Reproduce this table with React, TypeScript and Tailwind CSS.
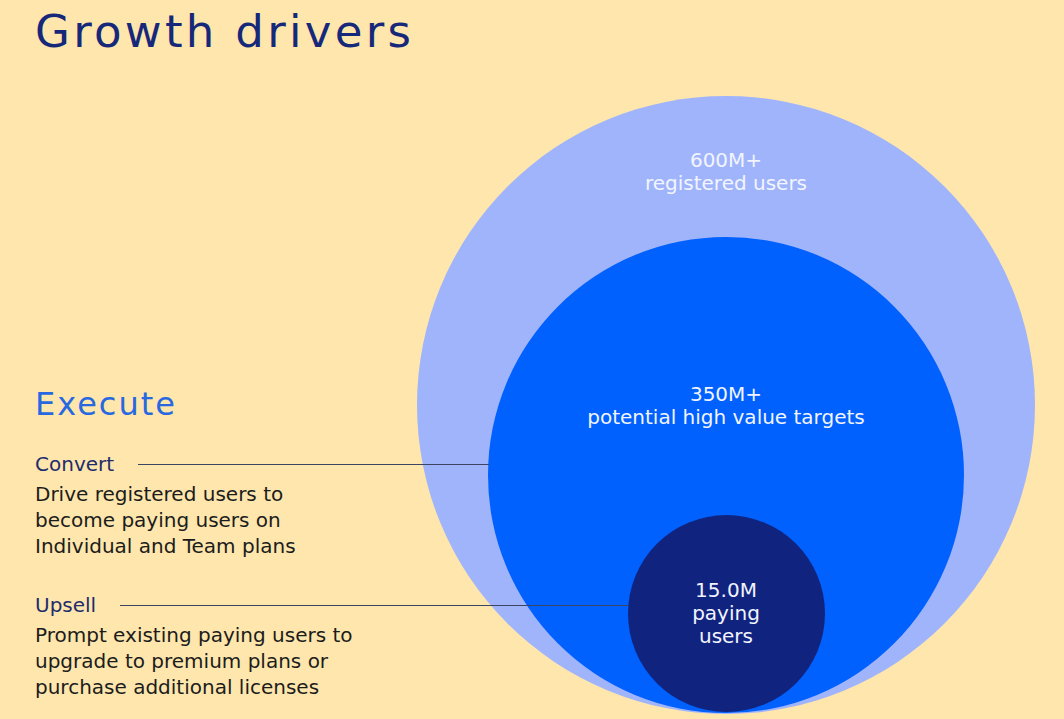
import React from 'react';

const font = "font-['DejaVu_Sans',sans-serif]";

function Lead({ label, width, lines }: { label: string; width: string; lines: string[] }) {
  return (
    <div>
      <div className={`flex items-center ${width}`}>
        <span className="text-[20px] leading-[25px] text-[#1f2c6c]">{label}</span>
        <span className="ml-[24px] h-px flex-1 bg-[#3c4464]" />
      </div>
      <p className="mt-[4px] text-[20px] leading-[26px] text-[#1c1c1c]">
        {lines.map((l) => (
          <span key={l} className="block whitespace-nowrap">{l}</span>
        ))}
      </p>
    </div>
  );
}

export default function App() {
  return (
    <div className={`h-[719px] w-full overflow-hidden bg-[#fee6ac] ${font}`}>
      <div className="flex">
        <div className="relative z-10 w-[417px] shrink-0 pl-[35px]">
          <h1 className="pt-[6px] text-[45px] leading-[52px] tracking-[3.3px] text-[#16287a] whitespace-nowrap">
            Growth drivers
          </h1>
          <h2 className="mt-[327px] text-[32px] leading-[38px] tracking-[2px] text-[#2868e1]">Execute</h2>
          <div className="mt-[29px]">
            <Lead
              label="Convert"
              width="w-[454px]"
              lines={['Drive registered users to', 'become paying users on', 'Individual and Team plans']}
            />
          </div>
          <div className="mt-[34px]">
            <Lead
              label="Upsell"
              width="w-[593px]"
              lines={['Prompt existing paying users to', 'upgrade to premium plans or', 'purchase additional licenses']}
            />
          </div>
        </div>

        <div className="mt-[96px] flex h-[618px] w-[618px] shrink-0 flex-col items-center rounded-full bg-[#a0b4fb] pb-px">
          <div className="pt-[53px] text-center text-[20px] leading-[23px] text-[#f2f4ff]">
            <div>600M+</div>
            <div>registered users</div>
          </div>
          <div className="mt-auto flex h-[476px] w-[476px] flex-col items-center rounded-full bg-[#0061fe] pb-px">
            <div className="pt-[146px] text-center text-[20px] leading-[23px] text-[#f2f4ff]">
              <div>350M+</div>
              <div>potential high value targets</div>
            </div>
            <div className="mt-auto flex h-[197px] w-[197px] flex-col items-center justify-center rounded-full bg-[#10247f] text-center text-[20px] leading-[23px] text-[#f2f4ff]">
              <div>15.0M</div>
              <div>paying</div>
              <div>users</div>
            </div>
          </div>
        </div>
      </div>
    </div>
  );
}
